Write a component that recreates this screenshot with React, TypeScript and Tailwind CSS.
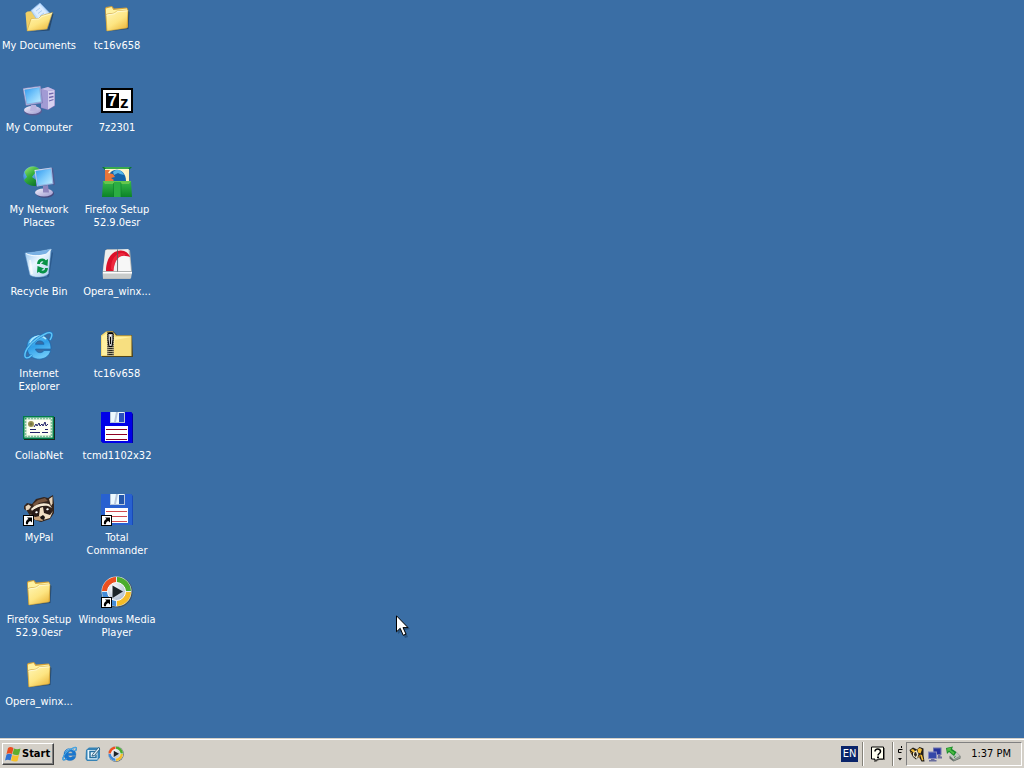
import React from 'react';
import type { ReactNode } from 'react';

const Svg = ({ children, small = false }: { children: ReactNode; small?: boolean }) => (
  <svg viewBox="0 0 32 32" className={small ? 'size-4 shrink-0' : 'size-8 shrink-0'} aria-hidden="true">
    {children}
  </svg>
);

const Gradients = () => (
  <svg className="absolute size-0" aria-hidden="true">
    <defs>
      <linearGradient id="folder" x1="0" y1="0" x2="0.7" y2="1">
        <stop offset="0" stopColor="#fff7b8" />
        <stop offset="0.6" stopColor="#fde582" />
        <stop offset="1" stopColor="#eebd45" />
      </linearGradient>
      <linearGradient id="screen" x1="0" y1="0" x2="1" y2="1">
        <stop offset="0" stopColor="#2f9af0" />
        <stop offset="0.5" stopColor="#7cc9fb" />
        <stop offset="1" stopColor="#c8f0ff" />
      </linearGradient>
      <linearGradient id="plastic" x1="0" y1="0" x2="1" y2="1">
        <stop offset="0" stopColor="#f1f0fb" />
        <stop offset="1" stopColor="#9d98cf" />
      </linearGradient>
      <radialGradient id="globe" cx="0.35" cy="0.3" r="0.8">
        <stop offset="0" stopColor="#7bd3ff" />
        <stop offset="1" stopColor="#1152b4" />
      </radialGradient>
      <linearGradient id="land" x1="0" y1="0" x2="0.6" y2="1">
        <stop offset="0" stopColor="#a5ec7c" />
        <stop offset="0.5" stopColor="#38b13c" />
        <stop offset="1" stopColor="#127a2c" />
      </linearGradient>
      <linearGradient id="bin" x1="0" y1="0" x2="1" y2="1">
        <stop offset="0" stopColor="#8dc1ee" />
        <stop offset="0.45" stopColor="#eaf6ff" />
        <stop offset="1" stopColor="#a9cdea" />
      </linearGradient>
      <linearGradient id="ie" x1="0" y1="0" x2="0.4" y2="1">
        <stop offset="0" stopColor="#7fd4fb" />
        <stop offset="0.5" stopColor="#2f9fe8" />
        <stop offset="1" stopColor="#6cc8f8" />
      </linearGradient>
      <linearGradient id="green" x1="0" y1="0" x2="0" y2="1">
        <stop offset="0" stopColor="#37b84a" />
        <stop offset="1" stopColor="#0c8427" />
      </linearGradient>
      <radialGradient id="disc" cx="0.35" cy="0.3" r="0.8">
        <stop offset="0" stopColor="#ffffff" />
        <stop offset="1" stopColor="#a9b8cc" />
      </radialGradient>
    </defs>
  </svg>
);

const Shortcut = () => (
  <g>
    <rect x="0.5" y="21.5" width="10" height="10" fill="#fff" stroke="#000" />
    <path d="M4 23.5h5v5l-1.700-1.600C5.500 27.500 5 28.600 5 30.300H3c-.6-2.500.5-4.300 2.500-5.200z" fill="#000" />
  </g>
);

const Folder = () => (
  <Svg>
    <path d="M6 29.500 27.500 27l1-17-1.500-1-1 17z" fill="#23405e" opacity="0.7" />
    <path d="M4 6.500 5 5l6-1 2 2.500L25.500 5.500 27 7v18.500L5.500 29z" fill="#d3a13a" />
    <path d="M5 6.500 10.500 5l2 3L26 6.500v3L5 12z" fill="#fff1a0" />
    <path d="M5 12.500 13.500 11l2-2L27 8l-1 18L6 29z" fill="url(#folder)" stroke="#c59a32" strokeWidth="0.5" />
    <path d="m5.500 13 8.500-1.300 2-2L26.500 8.800" fill="none" stroke="#fffde0" strokeWidth="0.8" />
  </Svg>
);

const Documents = () => (
  <Svg>
    <path d="m5 30 19.500-2.500L29.500 11l1 1-4 16.500z" fill="#203a58" opacity="0.7" />
    <path d="M2.500 11 4.500 9.500l6-.5 2 2L26 12l-3 15L4 29z" fill="#f0cf66" />
    <path d="m8 8.500 9-7.500 9.500 10L17 22.500z" fill="#c4e0ff" stroke="#8fb9ea" strokeWidth="0.7" />
    <path d="m10 8.500 6.500-5.500 7 7.500-7 7z" fill="#dcecff" />
    <path d="m13 9 4-3M15 11.500l4-3M17 14l4-3" stroke="#a9cdf4" strokeWidth="1" />
    <path d="m4 29 4-12 7.500-.5 3-3 11-3L24 27z" fill="url(#folder)" stroke="#c79a38" strokeWidth="0.5" />
    <path d="m8.500 17.500 7.500-.5 3-2.500 10-3" fill="none" stroke="#fffbd1" strokeWidth="0.8" />
  </Svg>
);

const Computer = () => (
  <Svg>
    <path d="m18 5 7-2 7 3v16l-7 4-7-2z" fill="#7b72b9" />
    <path d="m18 5 7 2v18.500l-7-2z" fill="#a29bd4" />
    <path d="m25 7 6.500-1v15.500l-6.500 4z" fill="#d7d1f0" />
    <path d="m18 5 7-2 6.500 3L25 7z" fill="#c3bce6" />
    <path d="m26 10 4.500-.8M26 13.500l4.500-1M26 17l4.500-1.500" stroke="#7168ad" strokeWidth="1.300" />
    <ellipse cx="10" cy="27" rx="9" ry="4.500" fill="#5b5b91" />
    <ellipse cx="9.500" cy="26" rx="8.500" ry="4" fill="url(#plastic)" />
    <path d="M8 21h5l1 6H7z" fill="#b9b3de" />
    <path d="M0 4.500 17.500 2 19.500 19 3 21.500z" fill="url(#plastic)" stroke="#6f72b0" strokeWidth="0.600" />
    <path d="M1.500 5.700 16.500 3.500l1.700 14.200L3.900 20z" fill="url(#screen)" stroke="#5a94cf" strokeWidth="0.400" />
  </Svg>
);

const SevenZip = () => (
  <Svg>
    <rect x="1" y="5" width="30" height="23" fill="#fff" stroke="#000" strokeWidth="2" />
    <rect x="5" y="9" width="13" height="15" fill="#000" />
    <text x="7" y="22" fontFamily="Liberation Sans, sans-serif" fontSize="16" fontWeight="700" fill="#fff">7</text>
    <text x="19" y="24" fontFamily="Liberation Sans, sans-serif" fontSize="17" fontWeight="700" fill="#000">z</text>
  </Svg>
);

const Network = () => (
  <Svg>
    <circle cx="10" cy="10" r="9.800" fill="url(#globe)" />
    <path d="M1.500 6C4 1 10-1 15 2c2 2 2 3 1 4l-4 1-3 4 4 3v6C7 20 3 18 1 14l3-3z" fill="url(#land)" />
    <ellipse cx="22" cy="27.500" rx="9" ry="4.200" fill="#45487d" />
    <ellipse cx="21" cy="26.500" rx="9" ry="4" fill="url(#plastic)" />
    <path d="m20 20 5-1 1 7.500h-6z" fill="#8e85bd" />
    <path d="m28.500 2 1.500 0 2 16.500-2 1z" fill="#4e5b91" />
    <path d="M11.500 4 28.500 1.500 30.500 18 14 20.500z" fill="url(#plastic)" />
    <path d="M12.700 5 28 2.700l1.700 14.700L14.800 19.600z" fill="url(#screen)" stroke="#6ba5da" strokeWidth="0.400" />
  </Svg>
);

const FirefoxBox = () => (
  <Svg>
    <path d="M1 1h30l-3 3H4z" fill="#0a7833" />
    <path d="M3 1h26l-2 2H5z" fill="#39aa4b" />
    <rect x="4" y="3" width="24" height="13" fill="#fff6cc" />
    <path d="M7 15c-1-15 18-15 18 0z" fill="#1462a8" />
    <path d="M12 6c4-4 9-2 11 3l-4-1-2-1-4 2z" fill="#55b5ea" />
    <path d="M4 4h5L7 7l5 1 2 3-4 1 3 2-1 1H4z" fill="#e9763a" />
    <path d="M24 4h4v11h-3c1-4 1-7-1-11z" fill="#fff0bc" />
    <path d="M2 15h28l1 16H1z" fill="url(#green)" />
    <path d="M2 15h28l-2 3H4z" fill="#65c64c" />
    <path d="M13 16h7v15h-7z" fill="#2cae43" />
    <path d="M12.500 17v14M20 17v14" stroke="#0c7e2a" strokeWidth="0.600" />
  </Svg>
);

const RecycleBin = () => (
  <Svg>
    <path d="m8 30 16-1 5-25 1 1-4 24-9 2z" fill="#234e7e" opacity="0.65" />
    <path d="M2 5c8-.5 17-2 26-4l-2.500 24.500C24 28.500 13 31 7 27z" fill="url(#bin)" stroke="#76a9d6" strokeWidth="0.500" />
    <path d="M2 5c8-.5 17-2 26-4l-4.500 5C17 7.500 7 7.500 2 5z" fill="#79b0e3" />
    <path d="M3 5.500c5 3 14 3 20.500.5L28 1.500" fill="none" stroke="#f4fbff" strokeWidth="1" />
    <path d="m7 12 2 14" stroke="#fff" strokeWidth="2" opacity="0.65" />
    <path d="M15.500 16c0-4 4.500-5.500 6.500-2.500" fill="none" stroke="#079247" strokeWidth="2.800" />
    <path d="m25 11-.5 7-6.500-2.500z" fill="#079247" />
    <path d="M23.500 20c0 4-4.500 5.500-7 2.500" fill="none" stroke="#079247" strokeWidth="2.800" />
    <path d="m14 25 .5-7 6.500 2.500z" fill="#079247" />
  </Svg>
);

const Opera = () => (
  <Svg>
    <path d="m4 3 2-2 23 1 2 22-2 7H2l-.5-6z" fill="#adb1b1" />
    <path d="m4.500 2 23-1 2.500 22H2z" fill="#eeefee" />
    <path d="M2 24h29l-1 6.500H2z" fill="#c9cccb" />
    <path d="M2 24h29v1.500H2z" fill="#fff" />
    <path d="M5 23C5 11 11 2 20 2.500c5 .2 8 3 9 6.500l-4.500-1C16 6 13 16 12.500 23z" fill="#db1029" />
    <path d="M10 21c0-9 4-15 10-16 2 0 4 .5 5 2-8 0-12 6-12.500 16z" fill="#ff4051" opacity="0.500" />
    <path d="M16.500 1.500v22" stroke="#535b5d" strokeWidth="0.800" />
    <path d="M18 10c2-2 7-3 11-1l1 14H18z" fill="#fff" opacity="0.500" />
  </Svg>
);

const IE = ({ small = false }: { small?: boolean }) => (
  <Svg small={small}>
    <path fillRule="evenodd" d="M28 19H12.500c.5 4 6.500 5 8.500 1.500h6.600C25 33 4 32 4 17 4 1 28.500 1 28 19zM12.500 14.300h8.500c-.5-4.600-7.800-4.600-8.500 0z" fill={small ? '#1976cf' : 'url(#ie)'} stroke="#1867ae" strokeWidth="0.700" />
    <path d="M7 13C10 5 19 4 23 9" fill="none" stroke="#b6ecff" strokeWidth="1.500" />
    <path d="M9 25c-4 4-8 4-7-1C3 17 13 8 22 4c6-3 9-1 5 6" fill="none" stroke="#1d79c9" strokeWidth="2.600" />
    <path d="M9 25c-4 4-8 4-7-1C3 17 13 8 22 4c6-3 9-1 5 6" fill="none" stroke="#62c6f4" strokeWidth="1.400" />
  </Svg>
);

const ZipFolder = () => (
  <Svg>
    <path d="M1 5 6 1h6l4 4h15l1 22H1z" fill="#51451a" />
    <path d="M0 5.500 5 1.500h7l3 4h15.500V26H0z" fill="#f5dc78" />
    <path d="M1 6.500 6 3h5l3 4h15.500v18H1z" fill="#fff1a1" />
    <path d="m14 10 16-3v18H12z" fill="#f3d66f" opacity="0.650" />
    <rect x="6" y="2" width="7" height="24" fill="#b7ae8b" />
    <path d="M7 2v24M12 2v24" stroke="#29291f" strokeWidth="1" strokeDasharray="1 1" />
    <path d="M9.500 2v24" stroke="#29291f" strokeWidth="4" strokeDasharray="1 1" />
    <path d="M7 3.500h5v6l-1 7H8l-1-7z" fill="#c8c8c8" stroke="#000" />
    <path d="M9.500 7v7" stroke="#000" />
    <path d="M9.500 5v1" stroke="#fff" />
  </Svg>
);

const CollabNet = () => (
  <Svg>
    <rect x="1" y="5" width="31" height="23" fill="#19251d" />
    <rect x="0" y="4" width="31" height="23" fill="#007c4c" />
    <rect x="1.500" y="5.500" width="28" height="20" fill="#e0f1db" />
    <rect x="2.500" y="6.500" width="26" height="18" fill="none" stroke="#26945e" strokeWidth="1.500" strokeDasharray="1 2" />
    <rect x="4" y="8" width="23" height="15" fill="#fffff4" />
    <circle cx="8" cy="12" r="3" fill="#999452" />
    <circle cx="8" cy="12" r="1.500" fill="#737343" />
    <path d="m11 15 2-3 1 2 2-3 1 3 2-2 1 2 2-4 1 4 2-2M7 20.500h10m2 0h6M7 17.500h6m9 0h3" fill="none" stroke="#222268" strokeWidth="1" />
  </Svg>
);

const Floppy = ({ shortcut = false }: { shortcut?: boolean }) => (
  <Svg>
    <path d="M1 0h29l2 2v29H2l-2-2V1z" fill={shortcut ? '#194bb8' : '#0000a4'} />
    <path d="M0 0h30l1 1v30H2l-2-2z" fill={shortcut ? '#2861d0' : '#0000e8'} />
    <rect x="9" y="0" width="15" height="11" fill="#b8c8dc" />
    <path d="M10 0h5l-2 10h-3zM17 0h6l-4 10h-4z" fill="#edfaff" />
    <rect x="18" y="1" width="5" height="9" fill={shortcut ? '#2457aa' : '#294fbd'} />
    <rect x="4" y="14" width="23" height="15" fill="#fff" />
    <path d="M5 17.500h21M5 22.500h21M5 27.500h21" stroke={shortcut ? '#ce4b51' : '#8d0024'} />
    {shortcut && <Shortcut />}
  </Svg>
);

const MyPal = () => (
  <Svg>
    <path d="m1 12 3-3 5 1 4-5 8-2 4 1 5-3 1 9v9l-4 6-9 3-9-3-5-8-3-2z" fill="#33241d" />
    <path d="m2.500 12.500 3-2 2.500 2-2 3-3 1z" fill="#e8d5bb" />
    <path d="m26 5 3.500-2.500v7L28 12z" fill="#e8d5bb" />
    <path d="m10 10 5-4 7-2 3 3-9 2-5 4z" fill="#76553f" />
    <path d="M8 15c5-5 11-7 18-5l3 4-4-2c-5-1-11 1-16 5z" fill="#f5e9d5" />
    <path d="M9 17c5-4 11-6 16-4l3 5-3 3-6-1-5 3-5-1z" fill="#281b18" />
    <path d="m12 18 2-1 1 1.500-2 1zM23 15l2-1 1 1.500-2 1z" fill="#fff" />
    <path d="m17 14 3-1 1 6 6 2 3-4-3 7-7 2-4-4z" fill="#f1dfc4" />
    <path d="m7 20 5 3 5-1 3 5-8-1z" fill="#c9a37b" />
    <path d="m17 23 3-2 2 2-1 3-3-1z" fill="#181211" />
    <Shortcut />
  </Svg>
);

const MediaPlayer = ({ small = false }: { small?: boolean }) => (
  <Svg small={small}>
    <circle cx="16" cy="16" r="15.500" fill="#45545d" />
    <circle cx="15.500" cy="15.500" r="15" fill="#e3edf1" />
    <path d="M1 15A14.500 14.500 0 0 1 15 1v6A9 9 0 0 0 7 15z" fill="#ed5020" />
    <path d="M16 1A14.500 14.500 0 0 1 30 15h-6A9 9 0 0 0 16 7z" fill="#4bac2d" />
    <path d="M30 16A14.500 14.500 0 0 1 16 30v-6a9 9 0 0 0 8-8z" fill="#f4bc29" />
    <path d="M15 30A14.500 14.500 0 0 1 1 16h6a9 9 0 0 0 8 8z" fill="#428bd8" />
    <circle cx="15.500" cy="15.500" r="9" fill="url(#disc)" stroke="#fff" />
    <path d="m11.500 9.500 10.500 6-10.500 6.500z" fill="#1c2428" />
    {!small && <Shortcut />}
  </Svg>
);

const items: { name: string; label: string; icon: ReactNode }[] = [
  { name: 'documents', label: 'My Documents', icon: <Documents /> },
  { name: 'computer', label: 'My Computer', icon: <Computer /> },
  { name: 'network', label: 'My Network\nPlaces', icon: <Network /> },
  { name: 'recycle', label: 'Recycle Bin', icon: <RecycleBin /> },
  { name: 'ie', label: 'Internet\nExplorer', icon: <IE /> },
  { name: 'collabnet', label: 'CollabNet', icon: <CollabNet /> },
  { name: 'mypal', label: 'MyPal', icon: <MyPal /> },
  { name: 'firefox-folder', label: 'Firefox Setup\n52.9.0esr', icon: <Folder /> },
  { name: 'opera-folder', label: 'Opera_winx...', icon: <Folder /> },
  { name: 'tc-folder', label: 'tc16v658', icon: <Folder /> },
  { name: '7z', label: '7z2301', icon: <SevenZip /> },
  { name: 'firefox', label: 'Firefox Setup\n52.9.0esr', icon: <FirefoxBox /> },
  { name: 'opera', label: 'Opera_winx...', icon: <Opera /> },
  { name: 'tc-zip', label: 'tc16v658', icon: <ZipFolder /> },
  { name: 'tcmd', label: 'tcmd1102x32', icon: <Floppy /> },
  { name: 'commander', label: 'Total\nCommander', icon: <Floppy shortcut /> },
  { name: 'wmp', label: 'Windows Media\nPlayer', icon: <MediaPlayer /> },
];

const Divider = () => <div className="h-6 w-0.5 border-l border-r border-l-[#858279] border-r-white" />;

const Flag = () => (
  <Svg small>
    <path d="M6 4c4-3 7-2 11 0l-3 12c-4-2-7-2-11 0z" fill="#e94d20" />
    <path d="M18 5c4 2 8 2 13 0l-3 12c-5 2-9 1-13-1z" fill="#5fae2e" />
    <path d="M3 17c4-2 7-2 11 0l-3 12c-4-2-7-2-11 0z" fill="#2f72d2" />
    <path d="M15 18c4 2 8 2 13 0l-3 12c-5 2-9 1-13-1z" fill="#f5c02a" />
  </Svg>
);

const Outlook = () => (
  <Svg small>
    <path d="m2 8 6-5h22v20l-6 7H4l-3-4z" fill="#3683b6" />
    <path d="M5 8h20v19H5z" fill="#e8f7ff" />
    <path d="M21 11H10v12h12v-6" fill="none" stroke="#27719f" strokeWidth="3" />
    <path d="m15 17 12-14 3 3-11 13-5 1z" fill="#d8edf4" stroke="#356081" strokeWidth="2" />
  </Svg>
);

const HelpIcon = () => (
  <Svg small>
    <path d="M7 4h23v24H18l-6 4v-4H7z" fill="#77756e" />
    <path d="M3 2h24v24H15l-5 5v-5H3z" fill="#fffff0" stroke="#000" strokeWidth="2" />
    <path d="M10 11c0-7 11-6 11 0 0 4-5 4-5 8" fill="none" stroke="#000" strokeWidth="3" />
    <path d="M14 21h4v3h-4z" fill="#000" />
  </Svg>
);

const TrayTool = () => (
  <Svg small>
    <path d="M1 8 8 3l8 4 5-5 8 3v14l2 12h-6l-5-9-6 5-6-5-5-9z" fill="#211d19" />
    <path d="m3 8 5-2 6 6-3 3zM17 6l5-2 4 3-3 8-5-2zM22 17l4 1 3 10-3 1z" fill="#f2bd38" />
    <path d="m8 14 7-6 4 8-3 10-8-6z" fill="#eee5c8" />
    <path d="m11 13 3-1 2 6-3 4-3-4z" fill="#2b2520" />
    <path d="m3 11 4 3-3 1zM18 21l4-4-1 8z" fill="#b98023" />
  </Svg>
);

const TrayNetwork = () => (
  <Svg small>
    <path d="M12 3h17v15H12z" fill="#6e72ad" />
    <path d="M14 5h13v11H14z" fill="#26339b" />
    <path d="M2 11h18v15H2z" fill="#8589be" />
    <path d="M4 13h14v11H4z" fill="#3448a8" />
    <path d="M8 26h7v2h4v3H4v-3h4zM22 18h5v3h3v4h-9z" fill="#696d9d" />
  </Svg>
);

const SafelyRemove = () => (
  <Svg small>
    <path d="m9 20 14-8 8 8v5l-14 6-8-6z" fill="#616a65" />
    <path d="m9 19 14-7 7 8-13 7z" fill="#bfc7c0" />
    <path d="m17 27 13-7v4l-13 6z" fill="#8e9a91" />
    <path d="m2 4 14-3-2 5 9 6-5 8-10-8-4 4z" fill="#188c2a" />
    <path d="m4 5 9-2-2 5 8 5-2 4-9-8-3 3z" fill="#4dbd43" />
    <path d="m18 23 3-2" stroke="#218a22" strokeWidth="2" />
  </Svg>
);

export default function App() {
  return (
    <div className="relative flex min-h-screen cursor-default flex-col overflow-hidden bg-[#3a6ea5] font-['DejaVu_Sans_Condensed','DejaVu_Sans',sans-serif] text-[11px] leading-[13px]">
      <Gradients />
      <main className="grid flex-1 auto-cols-[78px] grid-flow-col grid-rows-[repeat(9,82px)] content-start">
        {items.map((item) => (
          <button key={item.name} type="button" className="flex flex-col items-center gap-[5px] pt-0.5 text-white">
            {item.icon}
            <span className="whitespace-pre text-center">{item.label}</span>
          </button>
        ))}
      </main>
      <svg viewBox="0 0 14 23" className="absolute left-[396px] top-[615px] h-[23px] w-3.5" aria-hidden="true">
        <path d="m2 2 12 12-5 1 3 7-3 1-3-7-4 3z" fill="#183759" opacity="0.500" />
        <path d="M.500.800v16l3.700-3.500 3 7 2.800-1.200-3-6.500h5z" fill="#fff" stroke="#000" />
      </svg>
      <footer className="flex h-[30px] items-center border-t border-[#d4d0c8] bg-[#d4d0c8] shadow-[inset_0_1px_0_#fff]">
        <button type="button" className="ml-0.5 flex h-[22px] w-[52px] items-center gap-px border border-t-white border-r-[#404040] border-b-[#404040] border-l-white pl-0.5 font-bold text-black shadow-[inset_-1px_-1px_0_#808080]">
          <Flag />
          <span>Start</span>
        </button>
        <nav aria-label="Quick Launch" className="ml-2 flex items-center gap-[7px]">
          <button type="button" aria-label="Internet Explorer"><IE small /></button>
          <button type="button" aria-label="Outlook Express"><Outlook /></button>
          <button type="button" aria-label="Windows Media Player"><MediaPlayer small /></button>
        </nav>
        <div className="ml-auto flex h-full items-center pr-0.5">
          <button type="button" className="mr-1 flex h-4 w-[17px] items-center justify-center bg-[#0a246a] text-white">EN</button>
          <Divider />
          <button type="button" aria-label="Help" className="mx-1.5"><HelpIcon /></button>
          <Divider />
          <div className="flex w-3 flex-col items-center gap-1">
            <svg viewBox="0 0 6 8" className="h-2 w-1.5" aria-hidden="true"><path d="M4.500 0v2M1.500 3.500h4M1.500 3.500v3h3" fill="none" stroke="#000" /></svg>
            <svg viewBox="0 0 4 3" className="h-[3px] w-1" aria-hidden="true"><path d="M0 0h4L2 2.500z" fill="#000" /></svg>
          </div>
          <div className="flex h-6 items-center gap-0.5 border border-t-[#808080] border-r-white border-b-white border-l-[#808080] pl-0.5 pr-2.5">
            <TrayTool />
            <TrayNetwork />
            <SafelyRemove />
            <time className="ml-2 whitespace-nowrap text-black">1:37 PM</time>
          </div>
        </div>
      </footer>
    </div>
  );
}
